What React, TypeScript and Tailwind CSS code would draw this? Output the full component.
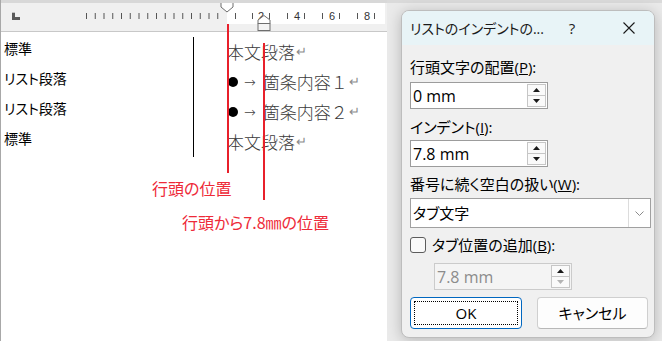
import React from 'react';

const ui = "font-['Open_Sans','Noto_Sans_CJK_JP',sans-serif] [font-feature-settings:'palt']";
const jp = "font-['Noto_Sans_CJK_JP',sans-serif] [font-feature-settings:'palt']";
const body = "font-['Noto_Sans_CJK_JP',sans-serif]";

const leftTicks = Array.from({ length: 16 }, (_, i) => 86 + i * 8.75);
const rightTicks = [235, 252, 269, 287, 304, 322, 339, 357, 374];
const rulerNums: [number, string][] = [[261, '2'], [297, '4'], [332, '6'], [367, '8']];

function Ruler() {
  return (
    <svg width={386} height={28} className="block">
      <g transform="translate(-1,0)">
        <rect x={0} y={0} width={387} height={28} fill="#f0f0f0" />
        <rect x={227} y={0} width={158} height={21} fill="#ffffff" />
        {/* tab selector */}
        <rect x={12} y={9.7} width={3} height={7.3} fill="#5a5a5a" />
        <rect x={12} y={14} width={8} height={3} fill="#5a5a5a" />
        {[...leftTicks, ...rightTicks].map((x) => (
          <rect key={x} x={x} y={10} width={1} height={6} fill="#555" />
        ))}
        {rulerNums.map(([x, n]) => (
          <text key={n} x={x} y={17} fontSize={11} textAnchor="middle" fill="#333" fontFamily="Liberation Sans, sans-serif">
            {n}
          </text>
        ))}
        {/* first line indent */}
        <polygon points="221,-1 233,-1 233,4 227,9 221,4" fill="#fff" stroke="#6e6e6e" strokeWidth={1} />
        {/* hanging indent */}
        <polygon points="258,20.5 258,17 264,12.5 270,17 270,20.5" fill="#fff" stroke="#6e6e6e" strokeWidth={1} />
        <rect x={258} y={20.5} width={12} height={7} fill="#f4f4f4" stroke="#6e6e6e" strokeWidth={1} />
      </g>
    </svg>
  );
}

function Mark() {
  return <span className="ml-[1px] text-[13px] text-[#8a8a8a] font-['DejaVu_Sans',sans-serif]">↵</span>;
}

function Bullet() {
  return (
    <>
      <span className="ml-[1px] inline-block w-[10px] h-[10px] rounded-full bg-black" />
      <span className="ml-[6px] mr-[7px] text-[14px] text-[#444] font-['DejaVu_Sans',sans-serif]">→</span>
    </>
  );
}

const rows: { style: string; body: React.ReactNode }[] = [
  { style: '標準', body: <>本文段落<Mark /></> },
  { style: 'リスト段落', body: <><Bullet />箇条内容１<Mark /></> },
  { style: 'リスト段落', body: <><Bullet />箇条内容２<Mark /></> },
  { style: '標準', body: <>本文段落<Mark /></> },
];

function DocPane() {
  return (
    <div className="relative w-[387px] h-full flex flex-col border-l border-[#a8a8a8] bg-white">
      <div className="h-[3px] bg-[#d8d8d8]" />
      <div className="border-b border-[#c8c8c8]">
        <Ruler />
      </div>
      <div className="pt-[5px] flex flex-col">
        {rows.map((r, i) => (
          <div key={i} className="flex h-[30px]">
            <div className={`w-[193px] border-r border-black pl-[3px] pt-[1px] text-[14px] leading-[20px] text-black ${jp}`}>
              {r.style}
            </div>
            <div className={`pl-[33px] flex items-center text-[17px] text-[#3a3a3a] font-light ${body}`}>{r.body}</div>
          </div>
        ))}
        <div className={`mt-[21px] ml-[151px] text-[16px] leading-[20px] text-[#ee2a38] ${jp}`}>行頭の位置</div>
        <div className={`mt-[14px] ml-[181px] text-[16px] leading-[20px] text-[#ee2a38] ${jp}`}>行頭から7.8㎜の位置</div>
      </div>
      {/* annotation lines */}
      <div className="absolute left-[226px] top-[24px] h-[149px] w-[1.5px] bg-[#e8202b]" />
      <div className="absolute left-[262px] top-[43px] h-[157px] w-[1.5px] bg-[#e8202b]" />
    </div>
  );
}

function Tri({ down, color }: { down?: boolean; color: string }) {
  return (
    <svg width={7} height={4} viewBox="0 0 7 4">
      <polygon points={down ? '0,0 7,0 3.5,4' : '0,4 7,4 3.5,0'} fill={color} />
    </svg>
  );
}

function SpinBox({ value, disabled }: { value: string; disabled?: boolean }) {
  return (
    <div
      className={`flex items-center w-[138px] h-[27px] border ${
        disabled ? 'w-[136px] border-[#cbcbcb] bg-[#f4f4f4] text-[#8c8c8c]' : 'border-[#9c9c9c] bg-white text-black'
      }`}
    >
      <span className="flex-1 pl-[2px] text-[16px] leading-none">{value}</span>
      <div className="mr-[1px] flex flex-col w-[19px] h-[23px] border border-[#c6c6c6] bg-[#fafafa]">
        <div className="flex-1 flex items-center justify-center border-b border-[#c6c6c6]">
          <Tri color="#1a1a1a" />
        </div>
        <div className="flex-1 flex items-center justify-center">
          <Tri down color={disabled ? '#b4b4b4' : '#1a1a1a'} />
        </div>
      </div>
    </div>
  );
}

function Label({ children }: { children: React.ReactNode }) {
  return <div className="text-[15px] leading-[20px] text-black">{children}</div>;
}

function Dialog() {
  return (
    <div className={`w-[254px] h-[328px] flex flex-col rounded-[8px] border border-[#bdbdbd] bg-[#f0f0f0] overflow-hidden shadow-[0_2px_14px_rgba(0,0,0,0.22)] ${ui}`}>
      <div className="h-[34px] flex items-center bg-[#e8f4f7] pl-[8px] pr-[10px]">
        <span className="flex-1 text-[14px] text-[#1a1a1a]">リストのインデントの...</span>
        <span className="w-[24px] text-center text-[15px] text-[#222]">?</span>
        <span className="ml-[30px] w-[30px] flex justify-center">
          <svg width={12} height={12} viewBox="0 0 12 12">
            <path d="M0.5 0.5 L11.5 11.5 M11.5 0.5 L0.5 11.5" stroke="#1a1a1a" strokeWidth={1.1} />
          </svg>
        </span>
      </div>
      <div className="flex-1 flex flex-col pl-[8px] pr-[3px] pt-[12px]">
        <Label>
          行頭文字の配置(<span className="underline">P</span>):
        </Label>
        <div className="mt-[5px]">
          <SpinBox value="0 mm" />
        </div>
        <div className="mt-[8px]">
          <Label>
            インデント(<span className="underline">I</span>):
          </Label>
        </div>
        <div className="mt-[3px]">
          <SpinBox value="7.8 mm" />
        </div>
        <div className="mt-[7px]">
          <Label>
            番号に続く空白の扱い(<span className="underline">W</span>):
          </Label>
        </div>
        <div className="mt-[4px] flex items-center w-[241px] h-[30px] border border-[#a0a0a0] bg-white">
          <span className="flex-1 pl-[2px] text-[15px] text-black">タブ文字</span>
          <span className="w-[22px] h-full flex items-center justify-center border-l border-[#dcdcdc]">
            <svg width={9} height={5} viewBox="0 0 9 5">
              <path d="M0.5 0.5 L4.5 4.5 L8.5 0.5" fill="none" stroke="#8a8a8a" strokeWidth={1} />
            </svg>
          </span>
        </div>
        <div className="mt-[7px] h-[20px] flex items-center">
          <span className="w-[16px] h-[16px] rounded-[3px] border border-[#5c5c5c] bg-[#f9f9f9]" />
          <span className="ml-[6px] text-[15px] text-black">
            タブ位置の追加(<span className="underline">B</span>):
          </span>
        </div>
        <div className="mt-[8px] ml-[24px]">
          <SpinBox value="7.8 mm" disabled />
        </div>
        <div className="mt-[7px] flex gap-[15px]">
          <div className="w-[112px] h-[32px] p-[3px] rounded-[4px] border-[1.5px] border-[#0067c0] bg-white">
            <div className="h-full flex items-center justify-center border border-dotted border-black text-[15px] text-black">
              OK
            </div>
          </div>
          <div className="w-[111px] h-[32px] flex items-center justify-center rounded-[4px] border border-[#cfcfcf] border-b-[#b8b8b8] bg-[#fdfdfd] text-[15px] text-black">
            キャンセル
          </div>
        </div>
      </div>
    </div>
  );
}

export default function App() {
  return (
    <div className="w-[662px] h-[341px] flex overflow-hidden bg-white">
      <DocPane />
      <div className="flex-1 h-full bg-[#eaeaea] border-t-[3px] border-[#dadada] pt-[7px] pl-[14px]">
        <Dialog />
      </div>
    </div>
  );
}
